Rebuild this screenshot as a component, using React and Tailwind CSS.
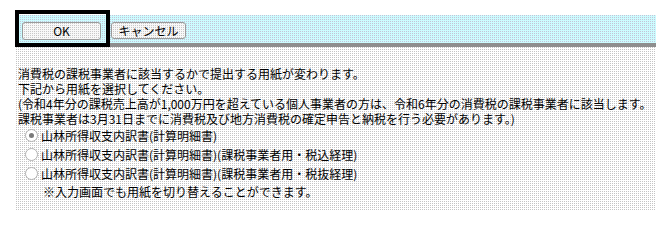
import React from "react";

const font = { fontFamily: '"Noto Sans CJK JP", "Noto Sans", sans-serif' };

function Radio({ checked }) {
  return (
    <span className="flex h-[13px] w-[13px] shrink-0 items-center justify-center rounded-full border border-[#b0b0b0] bg-white">
      {checked ? <span className="h-[5px] w-[5px] rounded-full bg-[#7a7a7a]" /> : null}
    </span>
  );
}

function RadioRow({ checked, label }) {
  return (
    <div className="flex h-[19px] items-center pl-[7px]">
      <Radio checked={checked} />
      <span className="ml-[3px] whitespace-nowrap">{label}</span>
    </div>
  );
}

export default function App() {
  return (
    <div
      className="relative flex h-[210px] w-[656px] overflow-hidden bg-white pl-[15px] pt-[15px] text-black"
      style={font}
    >
      <div className="flex flex-1 flex-col bg-[image:conic-gradient(#c4c4c4_0_25%,#ffffff_0)] bg-[length:2px_2px]">
        <div className="flex h-[28px] items-start gap-[10px] bg-[image:conic-gradient(#c4c4d6_0_25%,#ccfcff_0)] bg-[length:2px_2px] pl-[7px] pt-[7px]">
          <button className="flex h-[18px] w-[79px] items-center justify-center rounded-[3px] border border-[#9a9a9a] bg-[image:conic-gradient(#c8c8c8_0_25%,#f8f8f8_0)] bg-[length:2px_2px] text-[12px] leading-none">
            OK
          </button>
          <button className="flex h-[17px] w-[75px] items-center justify-center rounded-[3px] border border-[#9a9a9a] bg-[image:conic-gradient(#c8c8c8_0_25%,#f8f8f8_0)] bg-[length:2px_2px] text-[12px] leading-none">
            キャンセル
          </button>
        </div>
        <div className="h-[4px] bg-[#8e8e8e]" />
        <div className="whitespace-nowrap pl-[3px] pt-[19px] text-[12px] leading-[15px]">
          <div>消費税の課税事業者に該当するかで提出する用紙が変わります。</div>
          <div>下記から用紙を選択してください。</div>
          <div>(令和4年分の課税売上高が1,000万円を超えている個人事業者の方は、令和6年分の消費税の課税事業者に該当します。</div>
          <div>課税事業者は3月31日までに消費税及び地方消費税の確定申告と納税を行う必要があります。)</div>
          <RadioRow checked label="山林所得収支内訳書(計算明細書)" />
          <RadioRow label="山林所得収支内訳書(計算明細書)(課税事業者用・税込経理)" />
          <RadioRow label="山林所得収支内訳書(計算明細書)(課税事業者用・税抜経理)" />
          <div className="flex h-[16px] items-center pl-[25px]">※入力画面でも用紙を切り替えることができます。</div>
        </div>
      </div>
      <div className="pointer-events-none absolute left-[15px] top-[10px] h-[37px] w-[95px] border-4 border-black" />
    </div>
  );
}
